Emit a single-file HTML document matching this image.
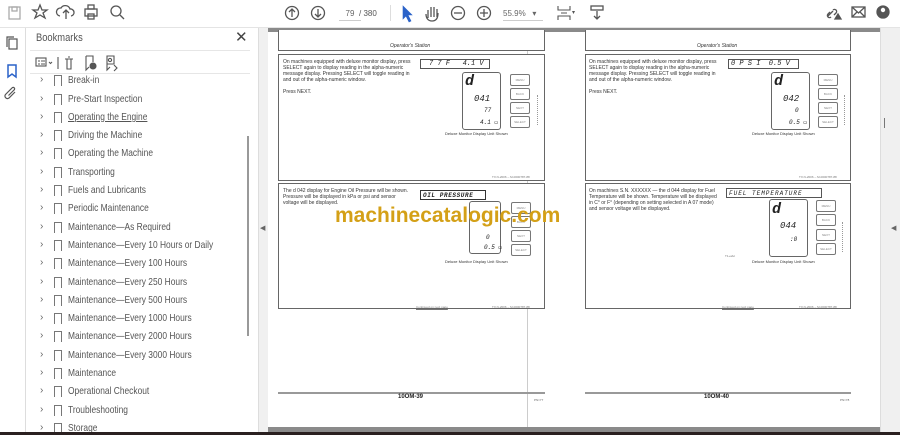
<!DOCTYPE html>
<html><head><meta charset="utf-8"><style>
*{margin:0;padding:0;box-sizing:border-box}
body{width:900px;height:435px;overflow:hidden;background:#fff;font-family:"Liberation Sans",sans-serif;position:relative}
.a{position:absolute}
.t{font-size:5px;color:#333;line-height:6px}
.box{position:absolute;border:1px solid #666;background:#fff}
.btn{position:absolute;width:20px;height:12px;border:1px solid #777;border-radius:2px;font-size:3px;color:#888;text-align:center;line-height:11px}
.bm{position:absolute;left:0;width:230px;height:18px;font-size:10.5px;color:#555;line-height:18px;white-space:nowrap}
.bm .c{position:absolute;left:14px;top:0;font-size:10px;color:#666}
.bm .i{position:absolute;left:28px;top:4px;width:8px;height:11px;border:1.3px solid #777;border-bottom:none}
.bm .x{position:absolute;left:42px;transform:scaleX(0.8);transform-origin:0 50%}
.seg{font-family:"Liberation Mono",monospace;font-style:italic;color:#222;white-space:nowrap}
</style></head><body>
<div class="a" style="left:0;top:0;width:900px;height:28px;background:#fff;border-bottom:1px solid #e4e4e4"></div>
<svg class="a" style="left:0;top:0" width="900" height="28" fill="none" stroke="#555" stroke-width="1.3">
<rect x="9" y="7" width="11" height="12" stroke="#aaa"/><rect x="12" y="7" width="5" height="4" stroke="#aaa"/>
<path d="M40 5l2 5h5l-4 3 2 5-5-3-5 3 2-5-4-3h5z"/>
<path d="M60 16a4 4 0 0 1 1-8a5 5 0 0 1 9 1a3 3 0 0 1 1 7M66 19v-8M63 13l3-3 3 3"/>
<rect x="85" y="9" width="12" height="7"/><rect x="88" y="5" width="6" height="4"/><rect x="88" y="14" width="6" height="5"/>
<circle cx="116" cy="11" r="5"/><path d="M120 15l4 4"/>
<circle cx="292" cy="13" r="6.5"/><path d="M292 17v-8M289 12l3-3 3 3"/>
<circle cx="318" cy="13" r="6.5"/><path d="M318 9v8M315 14l3 3 3-3"/>
<path d="M403 6v13l3-3 3 6 2-1-3-6h4z" fill="#2a62c9" stroke="#2a62c9" stroke-width="0.6"/>
<path d="M428 18v-8M431 17v-10M434 17v-10M437 17v-8M426 14c0 4 2 7 6 7s6-3 6-8"/>
<circle cx="458" cy="13" r="6.5"/><path d="M454 13h8"/>
<circle cx="484" cy="13" r="6.5"/><path d="M480 13h8M484 9v8"/>
<path d="M558 6v4h12V6M558 20v-4h12v4M561 13h6" stroke-width="1.1"/>
<rect x="591" y="6" width="12" height="4"/><path d="M597 11v8M594 16l3 3 3-3"/>
<path d="M828 16l5-5M830 12l-2 2a2 2 0 0 0 3 3M834 15l2-2a2 2 0 0 0-3-3"/><path d="M835 19l3-5 3 5z" fill="#555"/>
<rect x="852" y="7" width="13" height="10"/><path d="M852 7l6.5 6 6.5-6M852 17l5-5M865 17l-5-5"/>
<circle cx="883" cy="12" r="6" fill="#555"/><circle cx="883" cy="10" r="2.2" fill="#fff" stroke="none"/>
</svg>
<div class="a" style="left:339px;top:6px;width:22px;height:15px;border-bottom:1px solid #ccc;font-size:8px;color:#666;text-align:center;line-height:15px">79</div>
<div class="a" style="left:359px;top:6px;font-size:8px;color:#555;line-height:15px">/ 380</div>
<div class="a" style="left:390px;top:5px;width:1px;height:16px;background:#ddd"></div>
<div class="a" style="left:503px;top:6px;width:40px;height:15px;border-bottom:1px solid #ccc;font-size:8px;color:#666;line-height:15px">55.9% &nbsp;&nbsp;▾</div>
<div class="a" style="left:572px;top:9px;font-size:6px;color:#555">▾</div>
<div class="a" style="left:0;top:28px;width:26px;height:404px;background:#fff;border-right:1px solid #ddd"></div>
<svg class="a" style="left:0;top:28px" width="26" height="80" fill="none" stroke="#555" stroke-width="1.2">
<rect x="9" y="11" width="8" height="10"/><path d="M7 19v-10h7"/>
<path d="M8 37h8v12l-4-3-4 3z" stroke="#2a62c9" stroke-width="1.5"/>
<path d="M15 64l-6 6a2.5 2.5 0 0 1-3.5-3.5l7-7a1.5 1.5 0 0 1 2 2l-6 6"/>
</svg>
<div class="a" style="left:26px;top:28px;width:232px;height:404px;background:#fff"></div>
<div class="a" style="left:36px;top:32px;font-size:11px;color:#555;transform:scaleX(0.85);transform-origin:0 0">Bookmarks</div>
<div class="a" style="left:235px;top:28px;font-size:15px;color:#444">✕</div>
<div class="a" style="left:30px;top:50px;width:220px;height:1px;background:#e6e6e6"></div>
<svg class="a" style="left:30px;top:52px" width="100" height="22" fill="none" stroke="#555" stroke-width="1.1">
<rect x="6" y="6" width="10" height="8"/><path d="M8 9h2M11 9h4M8 12h2M11 12h4"/><path d="M19 10l1.5 1.5 1.5-1.5"/>
<path d="M28 5v12"/>
<path d="M35 7h8M37 7v10h4V7M38 5h2"/>
<path d="M56 4h7v6M56 4v14l3-3"/><circle cx="63" cy="14" r="3" fill="#555"/>
<path d="M77 4h7v8h-7zM77 12v6l3-3"/><circle cx="80" cy="8" r="1.6"/><path d="M84 13l3 3-3 3"/>
</svg>
<div class="a" style="left:30px;top:73px;width:220px;height:1px;background:#e6e6e6"></div>
<div class="a" style="left:26px;top:74px;width:224px;height:358px;overflow:hidden">
<div class="bm" style="top:-3px"><span class="c">›</span><span class="i"></span><span class="x">Break-in</span></div>
<div class="bm" style="top:15.5px"><span class="c">›</span><span class="i"></span><span class="x">Pre-Start Inspection</span></div>
<div class="bm" style="top:33.8px"><span class="c">›</span><span class="i"></span><span class="x" style="text-decoration:underline">Operating the Engine</span></div>
<div class="bm" style="top:52.1px"><span class="c">›</span><span class="i"></span><span class="x">Driving the Machine</span></div>
<div class="bm" style="top:70.4px"><span class="c">›</span><span class="i"></span><span class="x">Operating the Machine</span></div>
<div class="bm" style="top:88.7px"><span class="c">›</span><span class="i"></span><span class="x">Transporting</span></div>
<div class="bm" style="top:107px"><span class="c">›</span><span class="i"></span><span class="x">Fuels and Lubricants</span></div>
<div class="bm" style="top:125.3px"><span class="c">›</span><span class="i"></span><span class="x">Periodic Maintenance</span></div>
<div class="bm" style="top:143.6px"><span class="c">›</span><span class="i"></span><span class="x">Maintenance—As Required</span></div>
<div class="bm" style="top:161.9px"><span class="c">›</span><span class="i"></span><span class="x">Maintenance—Every 10 Hours or Daily</span></div>
<div class="bm" style="top:180.2px"><span class="c">›</span><span class="i"></span><span class="x">Maintenance—Every 100 Hours</span></div>
<div class="bm" style="top:198.5px"><span class="c">›</span><span class="i"></span><span class="x">Maintenance—Every 250 Hours</span></div>
<div class="bm" style="top:216.8px"><span class="c">›</span><span class="i"></span><span class="x">Maintenance—Every 500 Hours</span></div>
<div class="bm" style="top:235.1px"><span class="c">›</span><span class="i"></span><span class="x">Maintenance—Every 1000 Hours</span></div>
<div class="bm" style="top:253.4px"><span class="c">›</span><span class="i"></span><span class="x">Maintenance—Every 2000 Hours</span></div>
<div class="bm" style="top:271.7px"><span class="c">›</span><span class="i"></span><span class="x">Maintenance—Every 3000 Hours</span></div>
<div class="bm" style="top:290px"><span class="c">›</span><span class="i"></span><span class="x">Maintenance</span></div>
<div class="bm" style="top:308.3px"><span class="c">›</span><span class="i"></span><span class="x">Operational Checkout</span></div>
<div class="bm" style="top:326.6px"><span class="c">›</span><span class="i"></span><span class="x">Troubleshooting</span></div>
<div class="bm" style="top:344.9px"><span class="c">›</span><span class="i"></span><span class="x">Storage</span></div>
</div>
<div class="a" style="left:247px;top:136px;width:2px;height:200px;background:#999"></div>
<div class="a" style="left:258px;top:28px;width:10px;height:404px;background:#f0f0f0;border-left:1px solid #ddd"></div>
<div class="a" style="left:260px;top:224px;font-size:7px;color:#666">◀</div>
<div class="a" style="left:268px;top:28px;width:612px;height:4px;background:#8a8a8a"></div>
<div class="a" style="left:268px;top:427px;width:612px;height:5px;background:#8a8a8a"></div>
<div class="a" style="left:527px;top:32px;width:1px;height:395px;background:#ccc"></div>
<div class="a" style="left:880px;top:28px;width:20px;height:404px;background:#f0f0f0;border-left:1px solid #ddd"></div>
<div class="a" style="left:884px;top:118px;width:1px;height:10px;background:#777"></div>
<div class="a" style="left:891px;top:224px;font-size:7px;color:#666">◀</div>
<div class="a" style="left:0;top:432px;width:900px;height:3px;background:#2a2020"></div>

<div class="box" style="left:278px;top:30px;width:267px;height:21px;border-top:none"></div>
<div class="a t" style="left:390px;top:43px;font-style:italic">Operator's Station</div>
<div class="box" style="left:278px;top:54px;width:267px;height:127px"></div>
<div class="a t" style="left:283px;top:59px;width:135px">On machines equipped with deluxe monitor display, press SELECT again to display reading in the alpha-numeric message display. Pressing SELECT will toggle reading in and out of the alpha-numeric window.<br><br>Press NEXT.</div>
<div class="a seg" style="left:420px;top:59px;width:70px;height:10px;border:1px solid #555;font-size:7px;line-height:9px;padding-left:8px">7 7 F &nbsp; 4.1 V</div>
<div class="a" style="left:462px;top:72px;width:39px;height:58px;border:1px solid #666;border-radius:3px"></div>
<div class="a seg" style="left:465px;top:73px;font-size:15px;font-weight:bold">d</div>
<div class="a seg" style="left:474px;top:94px;font-size:9px">041</div>
<div class="a seg" style="left:484px;top:107px;font-size:6px">77</div>
<div class="a seg" style="left:480px;top:119px;font-size:6px">4.1 ▭</div>
<div class="btn" style="left:510px;top:74px">MENU</div><div class="btn" style="left:510px;top:88px">BACK</div><div class="btn" style="left:510px;top:102px">NEXT</div><div class="btn" style="left:510px;top:116px">SELECT</div>
<div class="a" style="left:537px;top:95px;width:1px;height:30px;border-left:1px dotted #999"></div>
<div class="a t" style="left:445px;top:131px;font-size:4px">Deluxe Monitor Display Unit Shown</div>
<div class="a t" style="left:492px;top:174px;font-size:3px;color:#777">TX.N-2006 -- M-0000787-88</div>
<div class="box" style="left:278px;top:183px;width:267px;height:126px"></div>
<div class="a t" style="left:283px;top:188px;width:130px">The d 042 display for Engine Oil Pressure will be shown. Pressure will be displayed in kPa or psi and sensor voltage will be displayed.</div>
<div class="a seg" style="left:420px;top:190px;width:66px;height:10px;border:1px solid #333;font-size:6px;line-height:9px;padding-left:2px;font-weight:bold;letter-spacing:0.6px">OIL PRESSURE</div>
<div class="a" style="left:469px;top:201px;width:32px;height:53px;border:1px solid #666;border-radius:3px"></div>
<div class="a seg" style="left:486px;top:234px;font-size:6px">0</div>
<div class="a seg" style="left:484px;top:244px;font-size:6px">0.5 ▭</div>
<div class="btn" style="left:511px;top:202px">MENU</div><div class="btn" style="left:511px;top:216px">BACK</div><div class="btn" style="left:511px;top:230px">NEXT</div><div class="btn" style="left:511px;top:244px">SELECT</div>
<div class="a t" style="left:445px;top:259px;font-size:4px">Deluxe Monitor Display Unit Shown</div>
<div class="a t" style="left:416px;top:304px;font-size:3px;color:#777;text-decoration:underline">Continued on next page</div>
<div class="a t" style="left:492px;top:304px;font-size:3px;color:#777">TX.N-2006 -- M-0000787-88</div>
<div class="a" style="left:278px;top:392px;width:267px;height:2px;background:#999"></div>
<div class="a" style="left:398px;top:394px;font-size:6px;color:#222;font-weight:bold">10OM-39</div>
<div class="a t" style="left:534px;top:397px;font-size:3px;color:#666">PN=77</div>

<div class="box" style="left:585px;top:30px;width:266px;height:21px;border-top:none"></div>
<div class="a t" style="left:697px;top:43px;font-style:italic">Operator's Station</div>
<div class="box" style="left:585px;top:54px;width:266px;height:127px"></div>
<div class="a t" style="left:589px;top:59px;width:135px">On machines equipped with deluxe monitor display, press SELECT again to display reading in the alpha-numeric message display. Pressing SELECT will toggle reading in and out of the alpha-numeric window.<br><br>Press NEXT.</div>
<div class="a seg" style="left:728px;top:59px;width:71px;height:10px;border:1px solid #555;font-size:7px;line-height:9px;padding-left:2px">0 P S I &nbsp;0.5 V</div>
<div class="a" style="left:771px;top:72px;width:39px;height:58px;border:1px solid #666;border-radius:3px"></div>
<div class="a seg" style="left:774px;top:73px;font-size:15px;font-weight:bold">d</div>
<div class="a seg" style="left:783px;top:94px;font-size:9px">042</div>
<div class="a seg" style="left:795px;top:107px;font-size:6px">0</div>
<div class="a seg" style="left:789px;top:119px;font-size:6px">0.5 ▭</div>
<div class="btn" style="left:818px;top:74px">MENU</div><div class="btn" style="left:818px;top:88px">BACK</div><div class="btn" style="left:818px;top:102px">NEXT</div><div class="btn" style="left:818px;top:116px">SELECT</div>
<div class="a" style="left:844px;top:95px;width:1px;height:30px;border-left:1px dotted #999"></div>
<div class="a t" style="left:752px;top:131px;font-size:4px">Deluxe Monitor Display Unit Shown</div>
<div class="a t" style="left:799px;top:174px;font-size:3px;color:#777">TX.N-2006 -- M-0000787-88</div>
<div class="box" style="left:585px;top:183px;width:266px;height:126px"></div>
<div class="a t" style="left:589px;top:188px;width:132px">On machines S.N. XXXXXX — the d 044 display for Fuel Temperature will be shown. Temperature will be displayed in C° or F° (depending on setting selected in A 07 mode) and sensor voltage will be displayed.</div>
<div class="a seg" style="left:726px;top:188px;width:96px;height:10px;border:1px solid #555;font-size:6px;line-height:9px;padding-left:2px;letter-spacing:1px">FUEL  TEMPERATURE</div>
<div class="a" style="left:769px;top:199px;width:39px;height:58px;border:1px solid #666;border-radius:3px"></div>
<div class="a seg" style="left:772px;top:201px;font-size:15px;font-weight:bold">d</div>
<div class="a seg" style="left:780px;top:221px;font-size:9px">044</div>
<div class="a seg" style="left:790px;top:236px;font-size:6px">:0</div>
<div class="btn" style="left:816px;top:200px">MENU</div><div class="btn" style="left:816px;top:214px">BACK</div><div class="btn" style="left:816px;top:229px">NEXT</div><div class="btn" style="left:816px;top:243px">SELECT</div>
<div class="a" style="left:842px;top:222px;width:1px;height:30px;border-left:1px dotted #999"></div>
<div class="a t" style="left:725px;top:253px;font-size:3px;color:#777">T1+abc</div>
<div class="a t" style="left:752px;top:259px;font-size:4px">Deluxe Monitor Display Unit Shown</div>
<div class="a t" style="left:722px;top:304px;font-size:3px;color:#777;text-decoration:underline">Continued on next page</div>
<div class="a t" style="left:799px;top:304px;font-size:3px;color:#777">TX.N-2006 -- M-0000787-88</div>
<div class="a" style="left:585px;top:392px;width:266px;height:2px;background:#999"></div>
<div class="a" style="left:704px;top:394px;font-size:6px;color:#222;font-weight:bold">10OM-40</div>
<div class="a t" style="left:840px;top:397px;font-size:3px;color:#666">PN=78</div>

<div class="a" style="left:335px;top:204px;font-size:21px;font-weight:bold;color:#d4a017;white-space:nowrap">machinecatalogic.com</div>
</body></html>
